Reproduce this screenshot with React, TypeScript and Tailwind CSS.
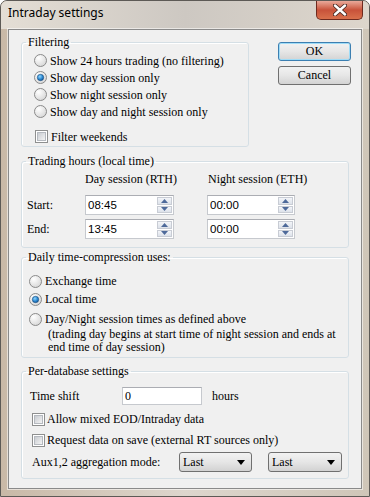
import React from "react"

const serif = "[font-family:'Liberation_Serif',serif] text-[12px] text-black"

function Radio({ checked = false }: { checked?: boolean }) {
  return (
    <svg width="13" height="13" viewBox="0 0 13 13" className="shrink-0">
      <defs>
        <radialGradient id="rbg" cx="0.35" cy="0.3" r="0.8">
          <stop offset="0" stopColor="#ffffff" />
          <stop offset="1" stopColor="#d4d4d4" />
        </radialGradient>
        <radialGradient id="rdot" cx="0.4" cy="0.35" r="0.7">
          <stop offset="0" stopColor="#8fd6ff" />
          <stop offset="0.6" stopColor="#2a87d0" />
          <stop offset="1" stopColor="#15508f" />
        </radialGradient>
      </defs>
      <circle cx="6.5" cy="6.5" r="6" fill="url(#rbg)" stroke="#8a8a8a" />
      {checked && <circle cx="6.5" cy="6.5" r="3.2" fill="url(#rdot)" stroke="#1c4f7f" strokeWidth="0.6" />}
    </svg>
  )
}

function Check() {
  return (
    <span className="w-[13px] h-[13px] shrink-0 border border-[#8e8f8f] bg-white flex items-center justify-center">
      <span className="w-[9px] h-[9px] border border-[#b5b9bf] bg-gradient-to-br from-[#c9ccd1] to-[#f4f4f4]" />
    </span>
  )
}

function Spin({ value, className = "" }: { value: string; className?: string }) {
  return (
    <div className={`h-[20px] flex items-stretch bg-white border border-[#c6c9ce] border-t-[#abadb3] ${className}`}>
      <span className="flex-1 pl-[2px] leading-[18px] [font-family:'Liberation_Sans',sans-serif] text-[11.5px] text-black">{value}</span>
      <div className="w-[15px] my-[1px] mr-[1px] flex flex-col gap-[1px]">
        <span className="flex-1 flex items-center justify-center bg-gradient-to-b from-[#f3f5f9] to-[#dde2ea] border border-[#c8ccd4]">
          <svg width="7" height="4" viewBox="0 0 7 4"><path d="M0 4 L3.5 0 L7 4 Z" fill="#4e6a9a" /></svg>
        </span>
        <span className="flex-1 flex items-center justify-center bg-gradient-to-b from-[#f3f5f9] to-[#dde2ea] border border-[#c8ccd4]">
          <svg width="7" height="4" viewBox="0 0 7 4"><path d="M0 0 L7 0 L3.5 4 Z" fill="#4e6a9a" /></svg>
        </span>
      </div>
    </div>
  )
}

function Select({ className = "" }: { className?: string }) {
  return (
    <div className={`h-[20px] flex items-center justify-between pl-[3px] pr-[6px] border border-[#707070] rounded-[3px] bg-gradient-to-b from-[#f2f2f2] via-[#e6e6e6] to-[#d2d2d2] ${className}`}>
      <span className={serif}>Last</span>
      <svg width="8" height="5" viewBox="0 0 8 5"><path d="M0 0 L8 0 L4 5 Z" fill="#000" /></svg>
    </div>
  )
}

function Group({ title, className = "", children }: { title: string; className?: string; children: React.ReactNode }) {
  return (
    <fieldset className={`border border-[#d5dfe5] rounded-[3px] shadow-[inset_1px_1px_0_#ffffff] ${className}`}>
      <legend className={`ml-[4px] px-[2px] leading-[15px] ${serif}`}>{title}</legend>
      {children}
    </fieldset>
  )
}

function RadioRow({ label, checked, className = "" }: { label: string; checked?: boolean; className?: string }) {
  return (
    <div className={`flex items-center gap-[3px] ${className}`}>
      <Radio checked={checked} />
      <span className={`${serif} whitespace-nowrap`}>{label}</span>
    </div>
  )
}

export default function App() {
  return (
    <div className="w-[370px] h-[497px] flex flex-col border border-[#5d5a56] rounded-t-[7px] overflow-hidden bg-gradient-to-r from-[#c9b9a7] via-[#ddd6cd] to-[#cfc6b8]">
      {/* title bar */}
      <div className="h-[28px] flex items-start justify-between bg-gradient-to-r from-[#e4ded5] via-[#cdc8c2] to-[#ddd6cc]">
        <span className="pl-[7px] pt-[3px] leading-[17px] [font-family:'Noto_Sans',sans-serif] text-[12px] text-black">Intraday settings</span>
        <div className="mr-[6px] w-[47px] h-[19px] rounded-b-[5px] border border-t-0 border-[#6e2a1f] bg-gradient-to-b from-[#e9a99a] via-[#c8523a] to-[#d9704c] flex items-center justify-center">
          <svg width="14" height="12" viewBox="0 0 14 12">
            <path d="M2 1.5 L12 10.5 M12 1.5 L2 10.5" stroke="#4a2a25" strokeWidth="4.2" strokeLinecap="round" />
            <path d="M2 1.5 L12 10.5 M12 1.5 L2 10.5" stroke="#ffffff" strokeWidth="2.4" strokeLinecap="round" />
          </svg>
        </div>
      </div>

      {/* client area */}
      <div className="mx-[7px] h-[460px] bg-[#f0f0f0] border border-[#8a8a8a] shadow-[0_0_0_1px_rgba(255,255,255,0.55)] pl-[12px]">
        <div className="mt-[5px] flex items-start">
          <Group title="Filtering" className="w-[228px] pb-[1px]">
            <div className="mt-[2px] pl-[12px] flex flex-col">
              <RadioRow label="Show 24 hours trading (no filtering)" className="h-[17px]" />
              <RadioRow label="Show day session only" checked className="h-[17px]" />
              <RadioRow label="Show night session only" className="h-[17px]" />
              <RadioRow label="Show day and night session only" className="h-[17px]" />
              <div className="mt-[8px] h-[17px] flex items-center gap-[3px] pl-[1px]">
                <Check />
                <span className={serif}>Filter weekends</span>
              </div>
            </div>
          </Group>
          <div className="ml-[29px] mt-[7px] flex flex-col gap-[5px]">
            <button className={`w-[73px] h-[19px] rounded-[3px] border border-[#3c7fb1] shadow-[inset_0_0_0_1px_#9fdcf7] bg-gradient-to-b from-[#f2f2f2] via-[#e6e6e6] to-[#d3d3d3] leading-[15px] ${serif}`}>OK</button>
            <button className={`w-[73px] h-[19px] rounded-[3px] border border-[#707070] bg-gradient-to-b from-[#f2f2f2] via-[#e6e6e6] to-[#d3d3d3] leading-[15px] ${serif}`}>Cancel</button>
          </div>
        </div>

        <Group title="Trading hours (local time)" className="mt-[7px] w-[328px] pb-[8px]">
          <div className="mt-[3px] pl-[5px] grid grid-cols-[58px_122px_88px] items-center">
            <span />
            <span className={`${serif} whitespace-nowrap leading-[15px]`}>Day session (RTH)</span>
            <span className={`${serif} whitespace-nowrap leading-[15px] pl-[1px]`}>Night session (ETH)</span>
            <span className={`${serif} mt-[8px]`}>Start:</span>
            <Spin value="08:45" className="mt-[8px] w-[89px]" />
            <Spin value="00:00" className="mt-[8px]" />
            <span className={`${serif} mt-[4px]`}>End:</span>
            <Spin value="13:45" className="mt-[4px] w-[89px]" />
            <Spin value="00:00" className="mt-[4px]" />
          </div>
        </Group>

        <Group title="Daily time-compression uses:" className="mt-[2px] w-[328px] pb-[3px]">
          <div className="mt-[7px] pl-[7px] flex flex-col">
            <RadioRow label="Exchange time" className="h-[18px]" />
            <RadioRow label="Local time" checked className="h-[18px]" />
            <RadioRow label="Day/Night session times as defined above" className="mt-[2px] h-[18px]" />
            <p className={`${serif} pl-[19px] leading-[13px]`}>
              (trading day begins at start time of night session and ends at
              <br />
              end time of day session)
            </p>
          </div>
        </Group>

        <Group title="Per-database settings" className="mt-[6px] w-[328px] pb-[6px]">
          <div className="pl-[8px] flex flex-col">
            <div className="mt-[8px] h-[18px] flex items-center">
              <span className={`${serif} w-[92px]`}>Time shift</span>
              <div className="w-[80px] h-[18px] bg-white border border-[#c6c9ce] border-t-[#abadb3] pl-[2px] flex items-center">
                <span className={serif}>0</span>
              </div>
              <span className={`${serif} ml-[10px]`}>hours</span>
            </div>
            <div className="mt-[4px] h-[20px] pl-[2px] flex items-center gap-[2px]">
              <Check />
              <span className={serif}>Allow mixed EOD/Intraday data</span>
            </div>
            <div className="mt-[1px] h-[20px] pl-[2px] flex items-center gap-[2px]">
              <Check />
              <span className={serif}>Request data on save (external RT sources only)</span>
            </div>
            <div className="mt-[2px] pl-[2px] flex items-center">
              <span className={`${serif} w-[147px]`}>Aux1,2 aggregation mode:</span>
              <Select className="w-[73px]" />
              <Select className="ml-[16px] w-[74px]" />
            </div>
          </div>
        </Group>
      </div>
    </div>
  )
}
